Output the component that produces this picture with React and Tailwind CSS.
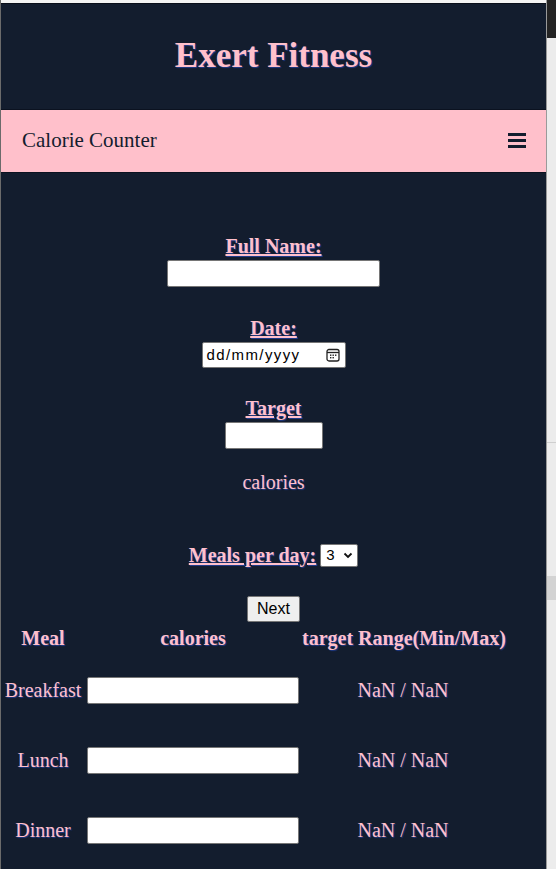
const serif = "font-['Liberation_Serif',serif]";

function Label({ children }) {
    return (
        <span className="text-[20px] leading-[24px] font-bold underline text-[#ffc0cb] [text-shadow:1px_1px_1px_#1e3a8a]">
            {children}
        </span>
    );
}

function TextBox({ className = "" }) {
    return <div className={`bg-white border border-[#767676] rounded-[2px] ${className}`} />;
}

function MealRow({ name }) {
    return (
        <div className="grid grid-cols-[82px_212px_202px] gap-x-[3px] items-center h-[70px]">
            <span className="text-center text-[20px] text-[#ffc0cb] [text-shadow:1px_1px_1px_#1e3a8a]">
                {name}
            </span>
            <TextBox className="h-[27px]" />
            <span className="text-center text-[20px] text-[#ffc0cb] [text-shadow:1px_1px_1px_#1e3a8a]">
                NaN / NaN
            </span>
        </div>
    );
}

export default function App() {
    const meals = ["Breakfast", "Lunch", "Dinner"];

    return (
        <div className={`flex w-[556px] h-[869px] overflow-hidden bg-[#e9e9e9] ${serif}`}>

            {/* phone panel */}
            <div className="w-[546px] h-full flex flex-col bg-[#131d2e] border-l border-[#6b6b6b]">

                <div className="h-[3px] bg-[#f4f4f4] border-b border-[#0a0f1a] box-content" />

                <div className="h-[105px] flex items-center justify-center">
                    <h1 className="text-[35px] font-bold text-[#ffc0cb] mt-[-1px] [text-shadow:1px_1px_1px_#1e3a8a]">
                        Exert Fitness
                    </h1>
                </div>

                <div className="h-[62px] flex items-center justify-between pl-[21px] pr-[20px] bg-[#ffc0cb] border-y border-[#0b1220] box-content">
                    <span className="text-[21px] text-[#131d2e]">Calorie Counter</span>
                    <div className="flex flex-col gap-[3px] mt-[-2px]">
                        <div className="w-[18px] h-[3px] bg-[#131d2e]" />
                        <div className="w-[18px] h-[3px] bg-[#131d2e]" />
                        <div className="w-[18px] h-[3px] bg-[#131d2e]" />
                    </div>
                </div>

                <div className="flex flex-col items-center">

                    <div className="mt-[61px]"><Label>Full Name:</Label></div>
                    <TextBox className="w-[213px] h-[27px]" />

                    <div className="mt-[29px]"><Label>Date:</Label></div>
                    <div className="w-[144px] h-[26px] bg-white border border-[#767676] rounded-[2px] flex items-center justify-between pl-[4px] pr-[4px] font-['Liberation_Sans',sans-serif] text-[15px] text-black">
                        <span className="tracking-[1.4px]">dd/mm/yyyy</span>
                        <svg width="16" height="16" viewBox="0 0 16 16" fill="none" stroke="#222" strokeWidth="1.3">
                            <rect x="2" y="2.5" width="12" height="11.5" rx="2" />
                            <line x1="2" y1="5.5" x2="14" y2="5.5" />
                            <g fill="#222" stroke="none">
                                <rect x="5" y="7.5" width="1.4" height="1.4" />
                                <rect x="7.5" y="7.5" width="1.4" height="1.4" />
                                <rect x="10" y="7.5" width="1.4" height="1.4" />
                                <rect x="5" y="10" width="1.4" height="1.4" />
                                <rect x="7.5" y="10" width="1.4" height="1.4" />
                            </g>
                        </svg>
                    </div>

                    <div className="mt-[28px]"><Label>Target</Label></div>
                    <TextBox className="w-[98px] h-[27px]" />

                    <span className="mt-[21px] text-[20px] leading-[24px] text-[#ffc0cb] [text-shadow:1px_1px_1px_#1e3a8a]">
                        calories
                    </span>

                    <div className="mt-[49px] flex items-center gap-[4px]">
                        <Label>Meals per day:</Label>
                        <div className="w-[38px] h-[23px] bg-white border border-[#767676] rounded-[2px] flex items-center justify-between pl-[5px] pr-[4px] font-['Liberation_Sans',sans-serif] text-[15px] text-black">
                            <span>3</span>
                            <svg width="10" height="10" viewBox="0 0 10 10" fill="none" stroke="#111" strokeWidth="1.8">
                                <path d="M1.5 3.5 L5 7 L8.5 3.5" />
                            </svg>
                        </div>
                    </div>

                    <button className="mt-[29px] w-[53px] h-[26px] bg-[#efefef] border border-[#767676] rounded-[2px] font-['Liberation_Sans',sans-serif] text-[16px] text-black">
                        Next
                    </button>
                </div>

                <div className="ml-[1px] mt-[1px]">
                    <div className="grid grid-cols-[82px_212px_202px] gap-x-[3px] items-start h-[32px]">
                        <span className="text-center text-[20px] font-bold text-[#ffc0cb] [text-shadow:1px_1px_1px_#1e3a8a]">Meal</span>
                        <span className="text-center text-[20px] font-bold text-[#ffc0cb] [text-shadow:1px_1px_1px_#1e3a8a]">calories</span>
                        <span className="text-center text-[20px] font-bold text-[#ffc0cb] whitespace-nowrap [text-shadow:1px_1px_1px_#1e3a8a]">target Range(Min/Max)</span>
                    </div>
                    {meals.map((meal) => (
                        <MealRow key={meal} name={meal} />
                    ))}
                </div>
            </div>

            {/* page behind */}
            <div className="w-[10px] h-full flex flex-col border-l border-[#9a9a9a]">
                <div className="h-[38px] bg-[#232323]" />
                <div className="h-[405px] bg-[#ececec] border-b border-[#cfcfcf]" />
                <div className="h-[133px] bg-[#ececec]" />
                <div className="h-[24px] bg-[#d3d3d3]" />
                <div className="flex-1 bg-[#ececec]" />
            </div>
        </div>
    );
}
